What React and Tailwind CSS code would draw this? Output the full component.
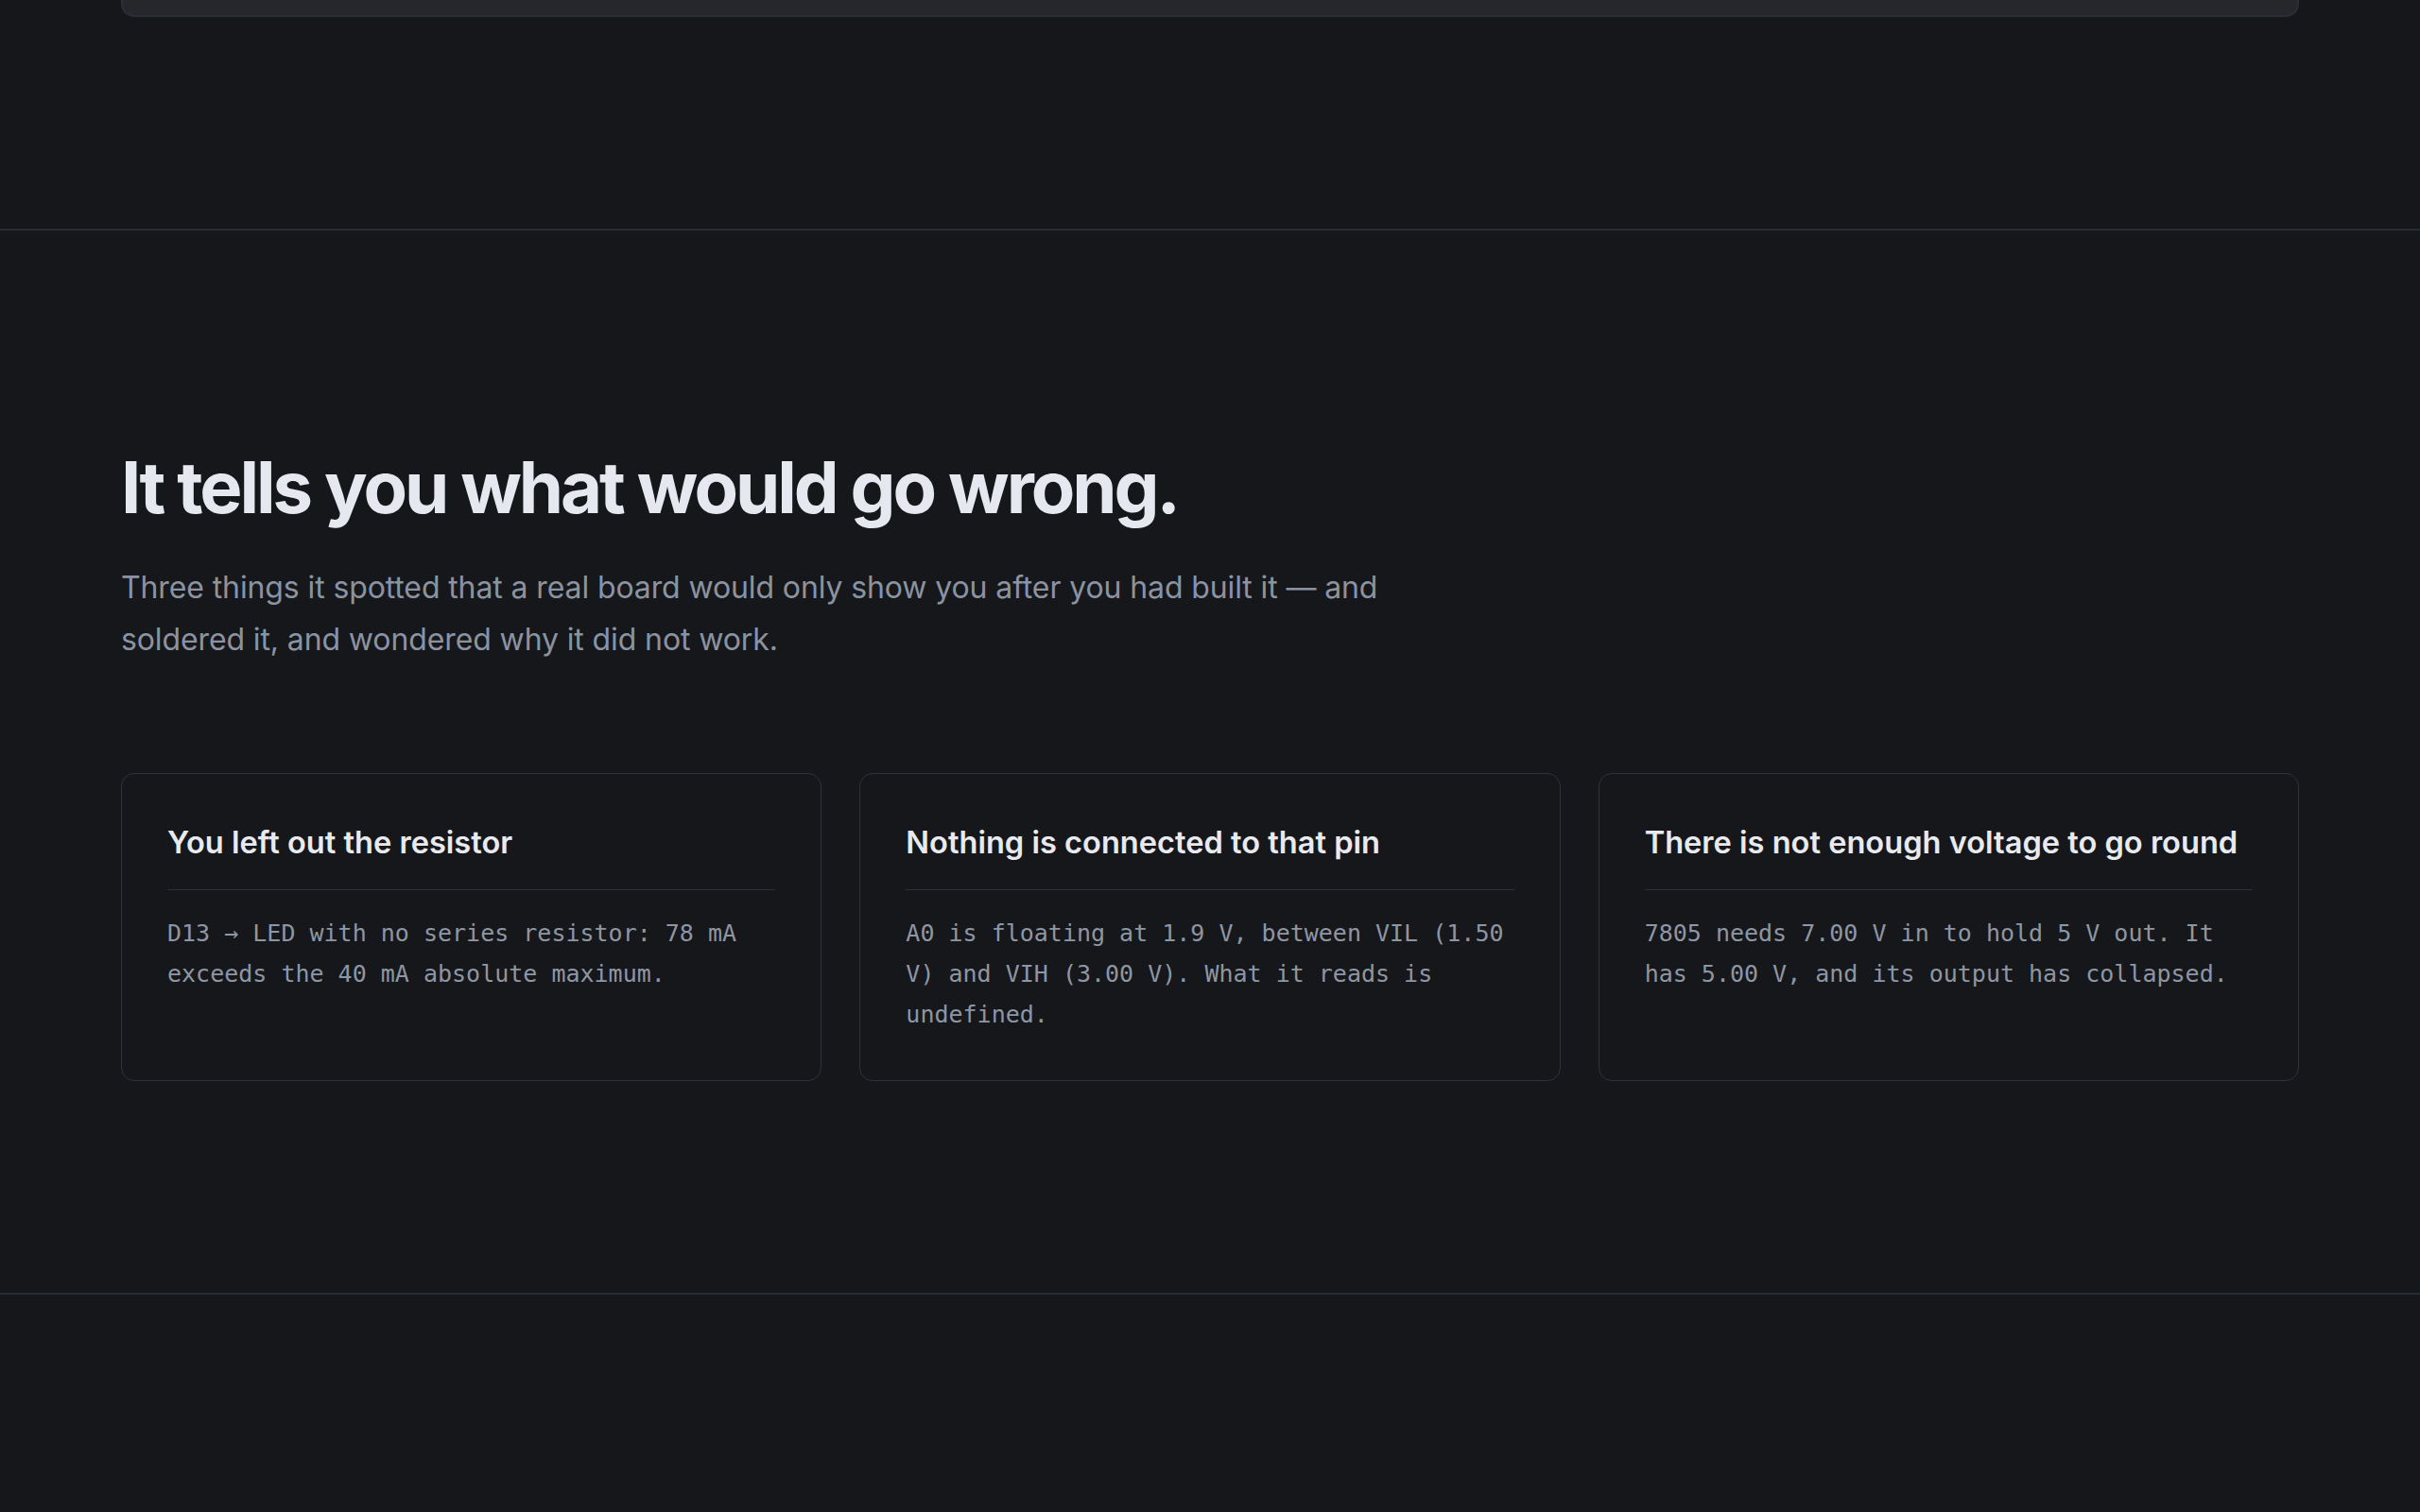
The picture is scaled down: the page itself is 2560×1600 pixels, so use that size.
const findings = [
  {
    title: "You left out the resistor",
    body: "D13 → LED with no series resistor: 78 mA exceeds the 40 mA absolute maximum.",
  },
  {
    title: "Nothing is connected to that pin",
    body: "A0 is floating at 1.9 V, between VIL (1.50 V) and VIH (3.00 V). What it reads is undefined.",
  },
  {
    title: "There is not enough voltage to go round",
    body: "7805 needs 7.00 V in to hold 5 V out. It has 5.00 V, and its output has collapsed.",
  },
];

function FindingCard({ title, body }) {
  return (
    <div className="rounded-[14px] border border-[#2e323a] bg-[#16171b] p-[48px]">
      <h3 className="border-b border-[#2c3038] pb-[26px] text-[32.6px] leading-[48px] font-semibold text-[#e8eaf0]">
        {title}
      </h3>
      <p className="mt-6 font-['DejaVu_Sans_Mono',monospace] text-[25px] leading-[43px] text-[#8e96a3]">
        {body}
      </p>
    </div>
  );
}

export default function App() {
  return (
    <div className="min-h-[1600px] bg-[#16171b] font-['Inter',sans-serif]">
      {/* tail of the previous section's panel */}
      <section className="mx-auto max-w-[2560px] px-[128px] pb-[224px]">
        <div className="h-[18px] rounded-b-[14px] border-x-2 border-b-2 border-[#2a2f37] bg-[#25272b]" />
      </section>

      <section className="border-y-2 border-[#282d35]">
        <div className="mx-auto max-w-[2560px] px-[128px] pt-[224px] pb-[224px]">
          <h2 className="text-[76px] leading-[95px] font-bold tracking-[-0.04em] text-[#e6e8ef]">
            It tells you what would go wrong.
          </h2>
          <p className="mt-8 max-w-[1440px] text-[32px] leading-[54.5px] tracking-[-0.0035em] text-[#8b93a1]">
            Three things it spotted that a real board would only show you after you had built it — and
            soldered it, and wondered why it did not work.
          </p>

          <div className="mt-[114px] grid grid-cols-3 gap-10">
            {findings.map((f) => (
              <FindingCard key={f.title} title={f.title} body={f.body} />
            ))}
          </div>
        </div>
      </section>
    </div>
  );
}
